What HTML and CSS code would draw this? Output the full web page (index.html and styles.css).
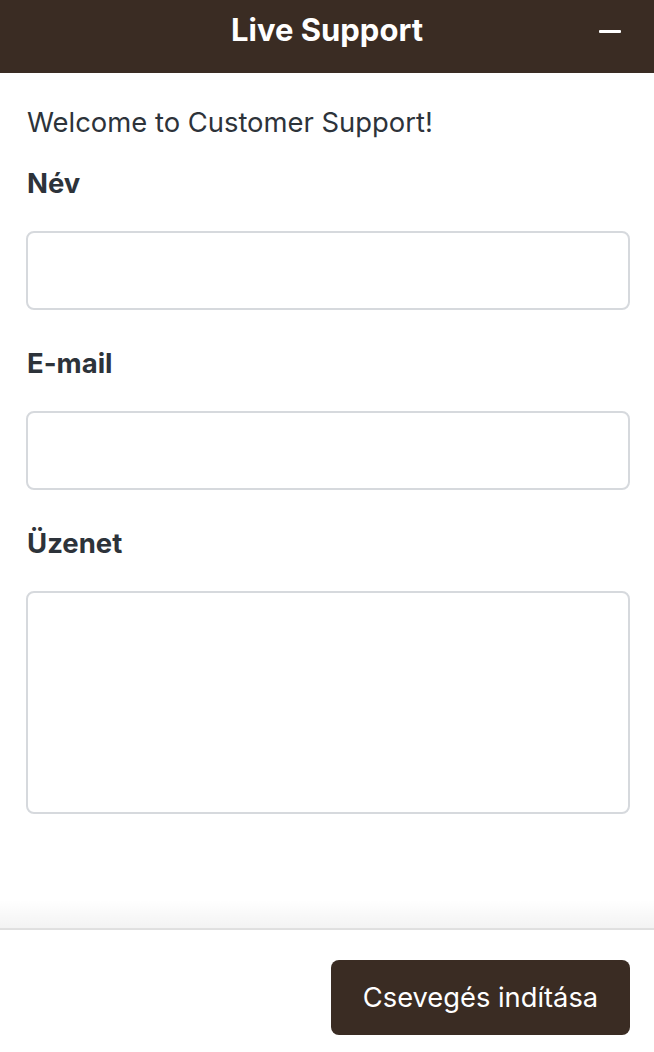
FILE: index.html
```html
<!DOCTYPE html>
<html lang="hu">
<head>
<meta charset="utf-8">
<title>Live Support</title>
<link rel="stylesheet" href="styles.css">
</head>
<body>
<div class="widget">
  <header class="header">
    <h1 class="title">Live Support</h1>
    <button class="minimize" aria-label="Minimize"><span class="bar"></span></button>
  </header>
  <main class="content">
    <p class="welcome">Welcome to Customer Support!</p>
    <form class="form">
      <label class="field">
        <span class="label">Név</span>
        <input class="input" type="text">
      </label>
      <label class="field">
        <span class="label">E-mail</span>
        <input class="input" type="email">
      </label>
      <label class="field">
        <span class="label">Üzenet</span>
        <textarea class="input textarea"></textarea>
      </label>
    </form>
  </main>
  <footer class="footer">
    <button class="start">Csevegés indítása</button>
  </footer>
</div>
</body>
</html>
```
FILE: styles.css
```css
html, body {
  margin: 0;
  padding: 0;
  height: 100%;
}
body {
  font-family: Inter, "Liberation Sans", sans-serif;
  color: #2d333a;
  background: #fff;
}
.widget {
  display: flex;
  flex-direction: column;
  height: 100vh;
}
.header {
  position: relative;
  flex: 0 0 73px;
  background: #3a2c23;
  display: flex;
  align-items: center;
  justify-content: center;
}
.title {
  margin: -15px 0 0;
  color: #fff;
  font-size: 31px;
  font-weight: 700;
  line-height: 1;
}
.minimize {
  position: absolute;
  right: 33px;
  top: 29px;
  width: 22px;
  height: 4px;
  padding: 0;
  border: 0;
  background: transparent;
  cursor: pointer;
}
.bar {
  display: block;
  width: 22px;
  height: 3px;
  background: #fff;
  border-radius: 1px;
}
.content {
  flex: 1;
  padding: 0 24px 0 26px;
}
.welcome {
  margin: 27px 0 20px 1px;
  font-size: 27.4px;
  line-height: 44px;
}
.form {
  display: flex;
  flex-direction: column;
}
.field {
  display: flex;
  flex-direction: column;
}
.label {
  font-size: 27.5px;
  font-weight: 700;
  line-height: 40px;
  margin: -1px 0 28px 1px;
}
.input {
  box-sizing: border-box;
  height: 79px;
  border: 2px solid #d6d9dd;
  border-radius: 8px;
  margin: 0 0 34px;
  font: inherit;
  padding: 0 14px;
  background: #fff;
}
.textarea {
  height: 223px;
  resize: none;
}
.footer {
  position: relative;
  flex: 0 0 auto;
  border-top: 2px solid #ebebeb;
  display: flex;
  justify-content: flex-end;
  padding: 30px 24px 17px;
}
.footer::before {
  content: "";
  position: absolute;
  left: 0;
  right: 0;
  bottom: 100%;
  height: 30px;
  background: linear-gradient(to bottom, rgba(0,0,0,0), rgba(0,0,0,0.05));
}
.start {
  height: 75px;
  width: 299px;
  border: 0;
  border-radius: 8px;
  background: #3a2c23;
  color: #fff;
  font-family: Inter, "Liberation Sans", sans-serif;
  font-size: 27.3px;
  font-weight: 400;
  cursor: pointer;
}
```
